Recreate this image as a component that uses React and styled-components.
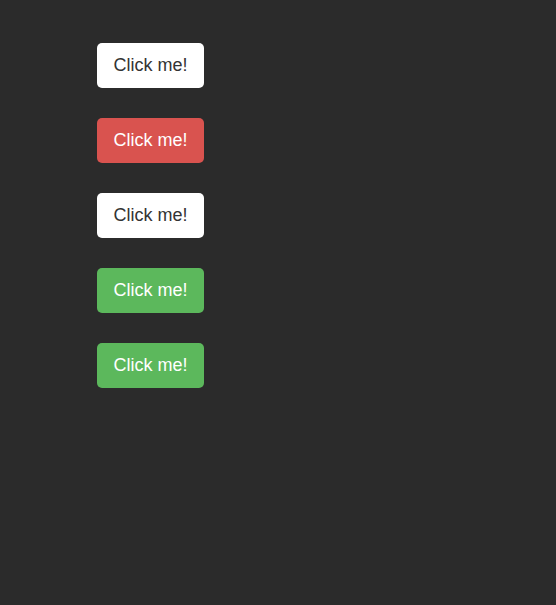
import styled, { createGlobalStyle } from "styled-components";

const GlobalStyle = createGlobalStyle`
  html, body {
    margin: 0;
    background-color: #2b2b2b;
    font-family: "Liberation Sans", Arial, sans-serif;
  }
`;

const Page = styled.main`
  display: flex;
  flex-direction: column;
  align-items: flex-start;
  gap: 30px;
  padding-block: 43px;
  padding-inline: 97px;
  min-height: 605px;
  box-sizing: border-box;
`;

const colors = {
  default: { bg: "#ffffff", fg: "#333333" },
  danger: { bg: "#d9534f", fg: "#ffffff" },
  success: { bg: "#5cb85c", fg: "#ffffff" },
};

const Button = styled.button`
  width: 107px;
  height: 45px;
  margin: 0;
  padding: 0;
  border: none;
  border-radius: 5px;
  font-family: "Liberation Sans", Arial, sans-serif;
  font-size: 18px;
  background-color: ${({ $variant }) => colors[$variant].bg};
  color: ${({ $variant }) => colors[$variant].fg};
  cursor: pointer;
`;

const buttons = ["default", "danger", "default", "success", "success"];

export default function App() {
  return (
    <>
      <GlobalStyle />
      <Page>
        {buttons.map((variant, i) => (
          <Button key={i} $variant={variant}>
            Click me!
          </Button>
        ))}
      </Page>
    </>
  );
}
